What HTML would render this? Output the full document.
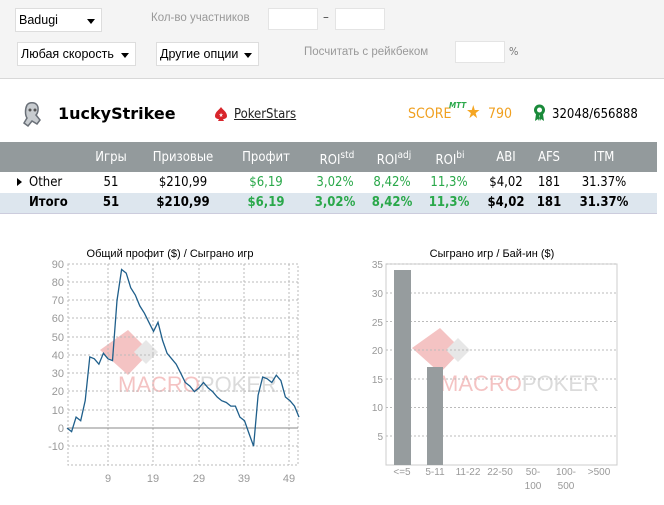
<!DOCTYPE html>
<html><head><meta charset="utf-8">
<style>
*{margin:0;padding:0;box-sizing:border-box}
body{width:664px;height:505px;background:#fff;font-family:"DejaVu Sans Condensed","Liberation Sans",sans-serif;font-size:13px;color:#000;position:relative;overflow:hidden}
.a{position:absolute;white-space:nowrap}
.top{position:absolute;left:0;top:0;width:664px;height:79px;background:#f4f4f4;border-bottom:1px solid #d8d8d8}
.sel{position:absolute;background:#fff;border:1px solid #ddd;height:24px;font-family:"Liberation Sans",sans-serif;font-size:12.5px;line-height:22px;padding-left:3px}
.sel:after{content:"";position:absolute;right:6px;top:10px;border-left:4px solid transparent;border-right:4px solid transparent;border-top:5px solid #000}
.inp{position:absolute;background:#fff;border:1px solid #e4e4e4;height:22px}
.lbl{color:#999;font-family:"Liberation Sans",sans-serif;font-size:11.5px}
.hdr{position:absolute;left:0;top:142px;width:657px;height:30px;background:#939a9c}
.r2{position:absolute;left:0;top:193px;width:657px;height:21px;background:#dde6ee;border-bottom:1px solid #ccd}
.c{position:absolute;transform:translateX(-50%);white-space:nowrap}
.h{color:#fff;top:150px;font-size:13px}
.h sup{font-size:10px;vertical-align:6px}
.g{color:#2aa84a}
.o{top:175px}
.t{top:195px;font-weight:bold}
</style></head><body>
<div class="top"></div>
<div class="sel" style="left:15px;top:8px;width:87px">Badugi</div>
<div class="a lbl" style="left:151px;top:12px">Кол-во участников</div>
<div class="inp" style="left:268px;top:8px;width:50px"></div>
<div class="a" style="left:323px;top:10px;color:#555">–</div>
<div class="inp" style="left:335px;top:8px;width:50px"></div>
<div class="sel" style="left:17px;top:42px;width:119px">Любая скорость</div>
<div class="sel" style="left:156px;top:42px;width:103px">Другие опции</div>
<div class="a lbl" style="left:304px;top:46px">Посчитать с рейкбеком</div>
<div class="inp" style="left:455px;top:41px;width:50px"></div>
<div class="a" style="left:509px;top:45px;color:#777;font-size:11px">%</div>

<svg class="a" style="left:20px;top:101px" width="24" height="28" viewBox="0 0 24 28"><path d="M7 4c2-3 8-3 10 0 2 3 1 8-1 10l4 5-3 4-5-3-4 5-4-3 3-5c-2-3-2-9 0-13z" fill="#c8ccd0" stroke="#6a7078" stroke-width="1.5"/><circle cx="10" cy="9" r="1.5" fill="#555"/><circle cx="15" cy="9" r="1.5" fill="#555"/></svg>
<div class="a" style="left:58px;top:104px;font-weight:bold;font-size:16px;font-family:'DejaVu Sans','Liberation Sans',sans-serif">1uckyStrikee</div>
<svg class="a" style="left:213px;top:106px" width="16" height="16" viewBox="0 0 16 16"><path d="M8 1C6 4 2 6 2 10c0 2 2 3 4 3l-1 2h6l-1-2c2 0 4-1 4-3 0-4-4-6-6-9z" fill="#d8252b"/><text x="8" y="11" font-size="6" fill="#fff" text-anchor="middle">★</text></svg>
<div class="a" style="left:234px;top:107px;text-decoration:underline;color:#222">PokerStars</div>
<div class="a" style="left:408px;top:106px;color:#f0a020;font-size:14px">SCORE</div>
<div class="a" style="left:449px;top:101px;color:#2aa84a;font-size:8px;font-weight:bold;font-style:italic">MTT</div>
<div class="a" style="left:466px;top:102px;color:#f5a623;font-size:18px">★</div>
<div class="a" style="left:488px;top:106px;color:#f0a020;font-size:14px">790</div>
<svg class="a" style="left:533px;top:104px" width="13" height="18" viewBox="0 0 13 18"><circle cx="6.5" cy="6" r="5.5" fill="#1a8a3a"/><circle cx="6.5" cy="6" r="2.5" fill="#fff"/><path d="M3 10l-1 7 3-2 1 2 1-6zM10 10l1 7-3-2-1 2-1-6z" fill="#1a8a3a"/></svg>
<div class="a" style="left:552px;top:107px;font-size:13px">32048/656888</div>

<div class="hdr"></div>
<div class="c h" style="left:111px">Игры</div>
<div class="c h" style="left:183px">Призовые</div>
<div class="c h" style="left:266px">Профит</div>
<div class="c h" style="left:337px">ROI<sup>std</sup></div>
<div class="c h" style="left:394px">ROI<sup>adj</sup></div>
<div class="c h" style="left:450px">ROI<sup>bi</sup></div>
<div class="c h" style="left:506px">ABI</div>
<div class="c h" style="left:549px">AFS</div>
<div class="c h" style="left:604px">ITM</div>

<div class="a" style="left:17px;top:178px;border-top:4px solid transparent;border-bottom:4px solid transparent;border-left:5px solid #000"></div>
<div class="a o" style="left:29px">Other</div>
<div class="c o" style="left:111px">51</div>
<div class="c o" style="left:183px">$210,99</div>
<div class="c o g" style="left:266px">$6,19</div>
<div class="c o g" style="left:335px">3,02%</div>
<div class="c o g" style="left:392px">8,42%</div>
<div class="c o g" style="left:449px">11,3%</div>
<div class="c o" style="left:506px">$4,02</div>
<div class="c o" style="left:549px">181</div>
<div class="c o" style="left:604px">31.37%</div>

<div class="r2"></div>
<div class="a t" style="left:29px">Итого</div>
<div class="c t" style="left:111px">51</div>
<div class="c t" style="left:183px">$210,99</div>
<div class="c t g" style="left:266px">$6,19</div>
<div class="c t g" style="left:335px">3,02%</div>
<div class="c t g" style="left:392px">8,42%</div>
<div class="c t g" style="left:449px">11,3%</div>
<div class="c t" style="left:506px">$4,02</div>
<div class="c t" style="left:549px">181</div>
<div class="c t" style="left:604px">31.37%</div>

<svg class="a" style="left:0;top:0" width="664" height="505" font-family="Liberation Sans, sans-serif">
<g opacity="0.35">
<polygon points="128,330 150,352 128,375 100,350" fill="#e25555"/>
<polygon points="146,340 158,352 146,364 134,352" fill="#bbb"/>
<text x="118" y="392" font-size="22" fill="#e25555">MACRO<tspan fill="#999">POKER</tspan></text>
<polygon points="440,328 462,350 440,373 412,348" fill="#e25555"/>
<polygon points="458,338 470,350 458,362 446,350" fill="#bbb"/>
<text x="440" y="391" font-size="22" fill="#e25555">MACRO<tspan fill="#999">POKER</tspan></text>
</g>
<text x="170" y="257" font-size="11" text-anchor="middle">Общий профит ($) / Сыграно игр</text>
<g stroke="#bbb" stroke-dasharray="2,2" fill="none">
<rect x="68" y="264" width="230" height="201"/>
<path d="M68 282H298M68 300H298M68 318H298M68 337H298M68 355H298M68 373H298M68 391H298M68 410H298M68 446H298"/>
<path d="M108 264V465M153 264V465M199 264V465M244 264V465M289 264V465"/>
</g>
<line x1="68" y1="428" x2="298" y2="428" stroke="#888"/>
<g font-size="11" fill="#999" text-anchor="end">
<text x="64" y="268">90</text><text x="64" y="286">80</text><text x="64" y="304">70</text><text x="64" y="322">60</text><text x="64" y="341">50</text><text x="64" y="359">40</text><text x="64" y="377">30</text><text x="64" y="395">20</text><text x="64" y="414">10</text><text x="64" y="432">0</text><text x="64" y="450">-10</text>
</g>
<g font-size="11" fill="#999" text-anchor="middle">
<text x="108" y="482">9</text><text x="153" y="482">19</text><text x="199" y="482">29</text><text x="244" y="482">39</text><text x="289" y="482">49</text>
</g>
<polyline fill="none" stroke="#1f5f8b" stroke-width="1.3" points="67,428 71.6,431.6 76.1,417.1 80.7,420.7 85.2,400.7 89.8,356.9 94.3,358.8 98.9,364.2 103.4,353.3 108,358.8 112.5,360.6 117,300.5 121.6,269.5 126.2,273.1 130.7,287.7 135.3,295 139.8,305.9 144.4,313.2 148.9,322.3 153.5,331.4 158,322.3 162.6,340.5 167.1,353.3 171.7,358.8 176.2,364.2 180.8,373.3 185.3,382.5 189.9,386.1 194.4,391.6 199,387.9 203.5,382.5 208.1,387.9 212.6,391.6 217.2,397 221.7,400.7 226.3,402.5 230.8,406.1 235.4,406.1 239.9,417.1 244.5,420.7 249,433.5 253.6,446.2 258.1,395.2 262.7,377 267.2,378.8 271.8,382.5 276.3,375.2 280.9,380.6 285.4,397 290,400.7 294.5,406.1 299,417.1"/>

<text x="492" y="257" font-size="11" text-anchor="middle">Сыграно игр / Бай-ин  ($)</text>
<rect x="386" y="264" width="231" height="201" fill="none" stroke="#ccc"/>
<g stroke="#bbb" stroke-dasharray="2,2"><path d="M386 264H617M386 293H617M386 321.5H617M386 350H617M386 379H617M386 407.5H617M386 436H617"/></g>
<rect x="394" y="270" width="17" height="195" fill="#969c9e"/>
<rect x="427" y="367" width="16" height="98" fill="#969c9e"/>
<g font-size="10" fill="#999" text-anchor="end">
<text x="383" y="268">35</text><text x="383" y="297">30</text><text x="383" y="326">25</text><text x="383" y="354">20</text><text x="383" y="383">15</text><text x="383" y="411">10</text><text x="383" y="440">5</text>
</g>
<g font-size="10" fill="#999" text-anchor="middle">
<text x="402" y="475">&lt;=5</text><text x="435" y="475">5-11</text><text x="468" y="475">11-22</text><text x="500" y="475">22-50</text><text x="533" y="475">50-</text><text x="533" y="489">100</text><text x="566" y="475">100-</text><text x="566" y="489">500</text><text x="599" y="475">&gt;500</text>
</g>
</svg>
</body></html>
